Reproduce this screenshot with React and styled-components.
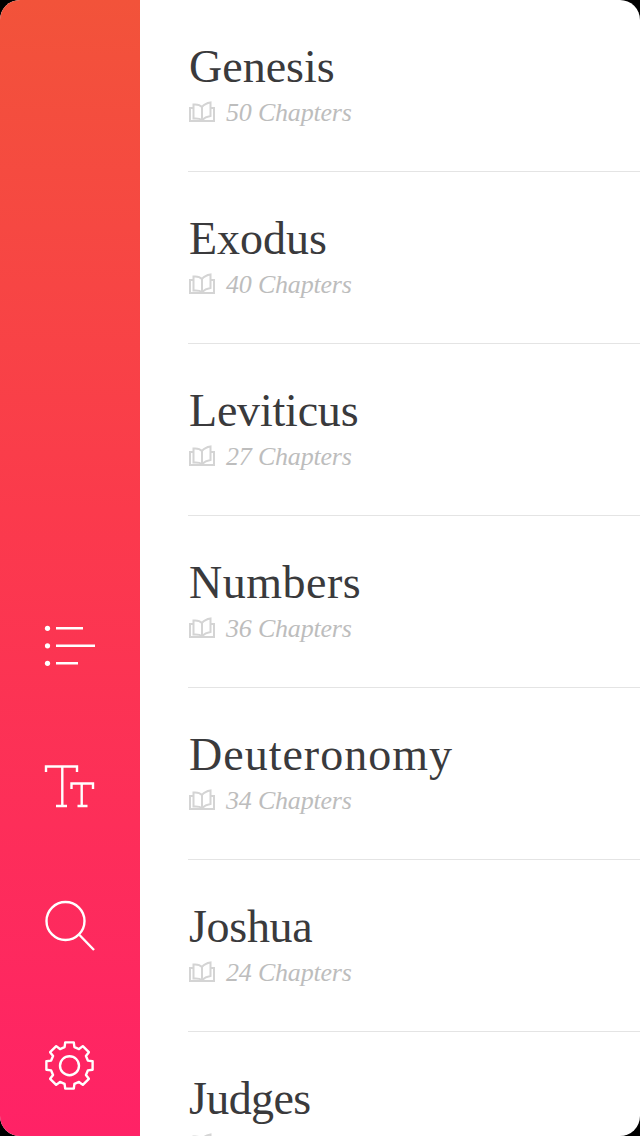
import React from "react";
import styled, { createGlobalStyle } from "styled-components";

const Global = createGlobalStyle`
  html, body { margin: 0; padding: 0; background: #000; }
  #root { width: 640px; height: 1136px; }
`;

const Screen = styled.div`
  display: flex;
  width: 640px;
  height: 1136px;
  overflow: hidden;
  border-radius: 20px;
  background: #fff;
`;

const Sidebar = styled.nav`
  flex: 0 0 140px;
  display: flex;
  flex-direction: column;
  align-items: center;
  justify-content: flex-end;
  gap: 88px;
  padding-bottom: 44px;
  box-sizing: border-box;
  background: linear-gradient(180deg, #f2533a 0%, #fb3a4c 45%, #ff2266 100%);
`;

const IconSvg = styled.svg`
  display: block;
  width: 52px;
  height: 52px;
  fill: none;
  stroke: #fff;
  stroke-width: 2.4;
`;

const List = styled.main`
  flex: 1;
  min-width: 0;
  padding-left: 48px;
`;

const Row = styled.article`
  height: 172px;
  box-sizing: border-box;
  border-bottom: 1px solid #e4e4e4;
  padding: 39px 0 0 1px;
  overflow: hidden;
`;

const Title = styled.h2`
  margin: 0;
  font: 400 46px/56px "Liberation Serif", serif;
  color: #3a3a3c;
  letter-spacing: ${(p) => p.$track}px;
`;

const Meta = styled.div`
  display: flex;
  align-items: center;
  gap: 11px;
  height: 36px;
  font: italic 400 26px/36px "Liberation Serif", serif;
  letter-spacing: -0.2px;
  color: #bdbdbd;
`;

const BookGlyph = styled.svg`
  flex: none;
  margin: -3px 0 0 0;
`;

const Book = () => (
  <BookGlyph width="26" height="22" viewBox="0 0 26 22" fill="none" stroke="#d4d4d4" strokeWidth="2">
    <path d="M13 6C11 3.800 8 3.200 4.500 3.500V17.500C8 17.200 11 17.500 13 19C15 17 18 15.500 21.500 15V1.500C18 2 15 3.500 13 6ZM13 6V19" />
    <path d="M4.500 7H1V20H25V7H21.500" />
  </BookGlyph>
);

const gearPath = (() => {
  const c = 25.5;
  const pt = (r, deg) => {
    const a = ((deg - 90) * Math.PI) / 180;
    return `${(c + r * Math.cos(a)).toFixed(2)} ${(c + r * Math.sin(a)).toFixed(2)}`;
  };
  let d = "";
  for (let i = 0; i < 8; i++) {
    const m = i * 45;
    d += `${i ? "L" : "M"}${pt(19, m - 15)}L${pt(23.5, m - 10.5)}L${pt(23.5, m + 10.5)}L${pt(19, m + 15)}`;
  }
  return d + "Z";
})();

const books = [
  ["Genesis", 50, 0],
  ["Exodus", 40, 0],
  ["Leviticus", 27, -0.2],
  ["Numbers", 36, 0.5],
  ["Deuteronomy", 34, 1],
  ["Joshua", 24, -0.3],
  ["Judges", 21, -0.6],
];

export default function App() {
  return (
    <>
      <Global />
      <Screen>
        <Sidebar>
          <IconSvg viewBox="0 0 52 52">
            <circle cx="3.5" cy="8.3" r="2.6" fill="#fff" stroke="none" />
            <circle cx="3.5" cy="25.8" r="2.6" fill="#fff" stroke="none" />
            <circle cx="3.5" cy="43.3" r="2.6" fill="#fff" stroke="none" />
            <path d="M12 8.300H39M12 25.800H51M12 43.300H34" />
          </IconSvg>
          <IconSvg viewBox="0 0 52 52">
            <path d="M2 12V6.500H33V12M18.300 6.500V46M12 46H23M27.500 29V23.500H49V29M37.700 23.500V46M33.500 46H43.500" />
          </IconSvg>
          <IconSvg viewBox="0 0 52 52">
            <circle cx="21.5" cy="21" r="19" />
            <path d="M35.500 35L50 50" />
          </IconSvg>
          <IconSvg viewBox="0 0 52 52">
            <path d={gearPath} strokeLinejoin="round" />
            <circle cx="25.5" cy="25.7" r="9.5" />
          </IconSvg>
        </Sidebar>
        <List>
          {books.map(([name, n, track]) => (
            <Row key={name}>
              <Title $track={track}>{name}</Title>
              <Meta><Book />{n} Chapters</Meta>
            </Row>
          ))}
        </List>
      </Screen>
    </>
  );
}
